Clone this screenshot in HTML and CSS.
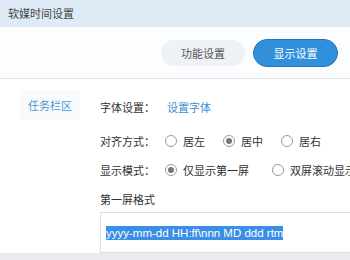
FILE: index.html
```html
<!DOCTYPE html>
<html lang="zh-CN">
<head>
    <meta charset="UTF-8">
    <meta name="viewport" content="width=device-width, initial-scale=1.0">
    <title>软媒时间设置</title>
    <link rel="stylesheet" href="styles.css">
</head>
<body>
    <div class="window">
        <div class="title-bar">软媒时间设置</div>
        <div class="tab-bar">
            <button class="tab">功能设置</button>
            <button class="tab active">显示设置</button>
        </div>
        <div class="main">
            <div class="sidebar">
                <div class="side-item">任务栏区</div>
            </div>
            <div class="content">
                <div class="row row-font">
                    <span class="label">字体设置：</span>
                    <a class="link" href="#">设置字体</a>
                </div>
                <div class="row row-align">
                    <span class="label">对齐方式：</span>
                    <label class="radio"><span class="dot"></span>居左</label>
                    <label class="radio checked"><span class="dot"></span>居中</label>
                    <label class="radio"><span class="dot"></span>居右</label>
                </div>
                <div class="row row-mode">
                    <span class="label">显示模式：</span>
                    <label class="radio checked wide"><span class="dot"></span>仅显示第一屏</label>
                    <label class="radio"><span class="dot"></span>双屏滚动显示</label>
                </div>
                <div class="row row-format">
                    <span class="label">第一屏格式</span>
                </div>
                <div class="format-box">
                    <span class="selected">yyyy-mm-dd HH:ff\nnn MD ddd rtm</span>
                </div>
            </div>
        </div>
        <div class="footer"></div>
    </div>
</body>
</html>
```

FILE: styles.css
```css
body {
    margin: 0;
    font-family: "Noto Sans CJK SC", "Noto Sans", sans-serif;
    font-size: 11px;
    color: #333;
    background-color: #e9ebee;
}
.window {
    width: 350px;
    height: 260px;
    overflow: hidden;
    background-color: #fcfdfe;
}
.title-bar {
    height: 27px;
    line-height: 27px;
    padding-left: 8px;
    background-color: #deebf6;
    color: #444;
}
.tab-bar {
    display: flex;
    justify-content: flex-end;
    align-items: center;
    gap: 8px;
    padding-right: 12px;
    border-bottom: 1px solid #e4e7ea;
    box-sizing: border-box;
    height: 52px;
}
.tab {
    width: 84px;
    height: 26px;
    border: 1px solid transparent;
    border-radius: 13px;
    background-color: #eef1f5;
    color: #555;
    font-family: inherit;
    font-size: 11px;
    padding: 0;
}
.tab.active {
    width: 85px;
    height: 28px;
    border-radius: 14px;
    background-color: #3190db;
    border-color: #2472b8;
    color: #fff;
}
.main {
    display: flex;
    height: 174px;
    background-color: #fff;
}
.sidebar {
    width: 100px;
    flex-shrink: 0;
    padding-top: 11px;
}
.side-item {
    margin-left: 20px;
    width: 60px;
    height: 30px;
    line-height: 30px;
    text-align: center;
    color: #4b97cf;
    background-color: #f8fbfd;
}
.content {
    flex: 1;
    min-width: 0;
    padding-top: 18px;
}
.row {
    display: flex;
    align-items: center;
    height: 20px;
    white-space: nowrap;
}
.row-align {
    margin-top: 14px;
}
.row-mode,
.row-format {
    margin-top: 9px;
}
.label {
    width: 65px;
    flex-shrink: 0;
    color: #333;
}
.link {
    margin-left: 2px;
    color: #3d8fd3;
    text-decoration: none;
}
.radio {
    display: flex;
    align-items: center;
    flex-shrink: 0;
    margin-right: 18px;
    color: #333;
}
.radio.wide {
    margin-right: 23px;
}
.dot {
    width: 10px;
    height: 10px;
    border: 1.5px solid #9a9a9a;
    border-radius: 50%;
    margin-right: 6px;
    position: relative;
}
.checked .dot::after {
    content: "";
    position: absolute;
    left: 2px;
    top: 2px;
    width: 6px;
    height: 6px;
    border-radius: 50%;
    background-color: #777;
}
.format-box {
    margin-top: 3px;
    height: 41px;
    border: 1px solid #dcdfe3;
    border-right: none;
    box-sizing: border-box;
    padding-left: 5px;
    display: flex;
    align-items: center;
}
.selected {
    background-color: #3a8ee6;
    color: #fff;
    line-height: 14px;
    font-family: "Liberation Sans", Arial, sans-serif;
    font-size: 11.5px;
}
.footer {
    height: 7px;
    background-color: #e9ebee;
}
```
